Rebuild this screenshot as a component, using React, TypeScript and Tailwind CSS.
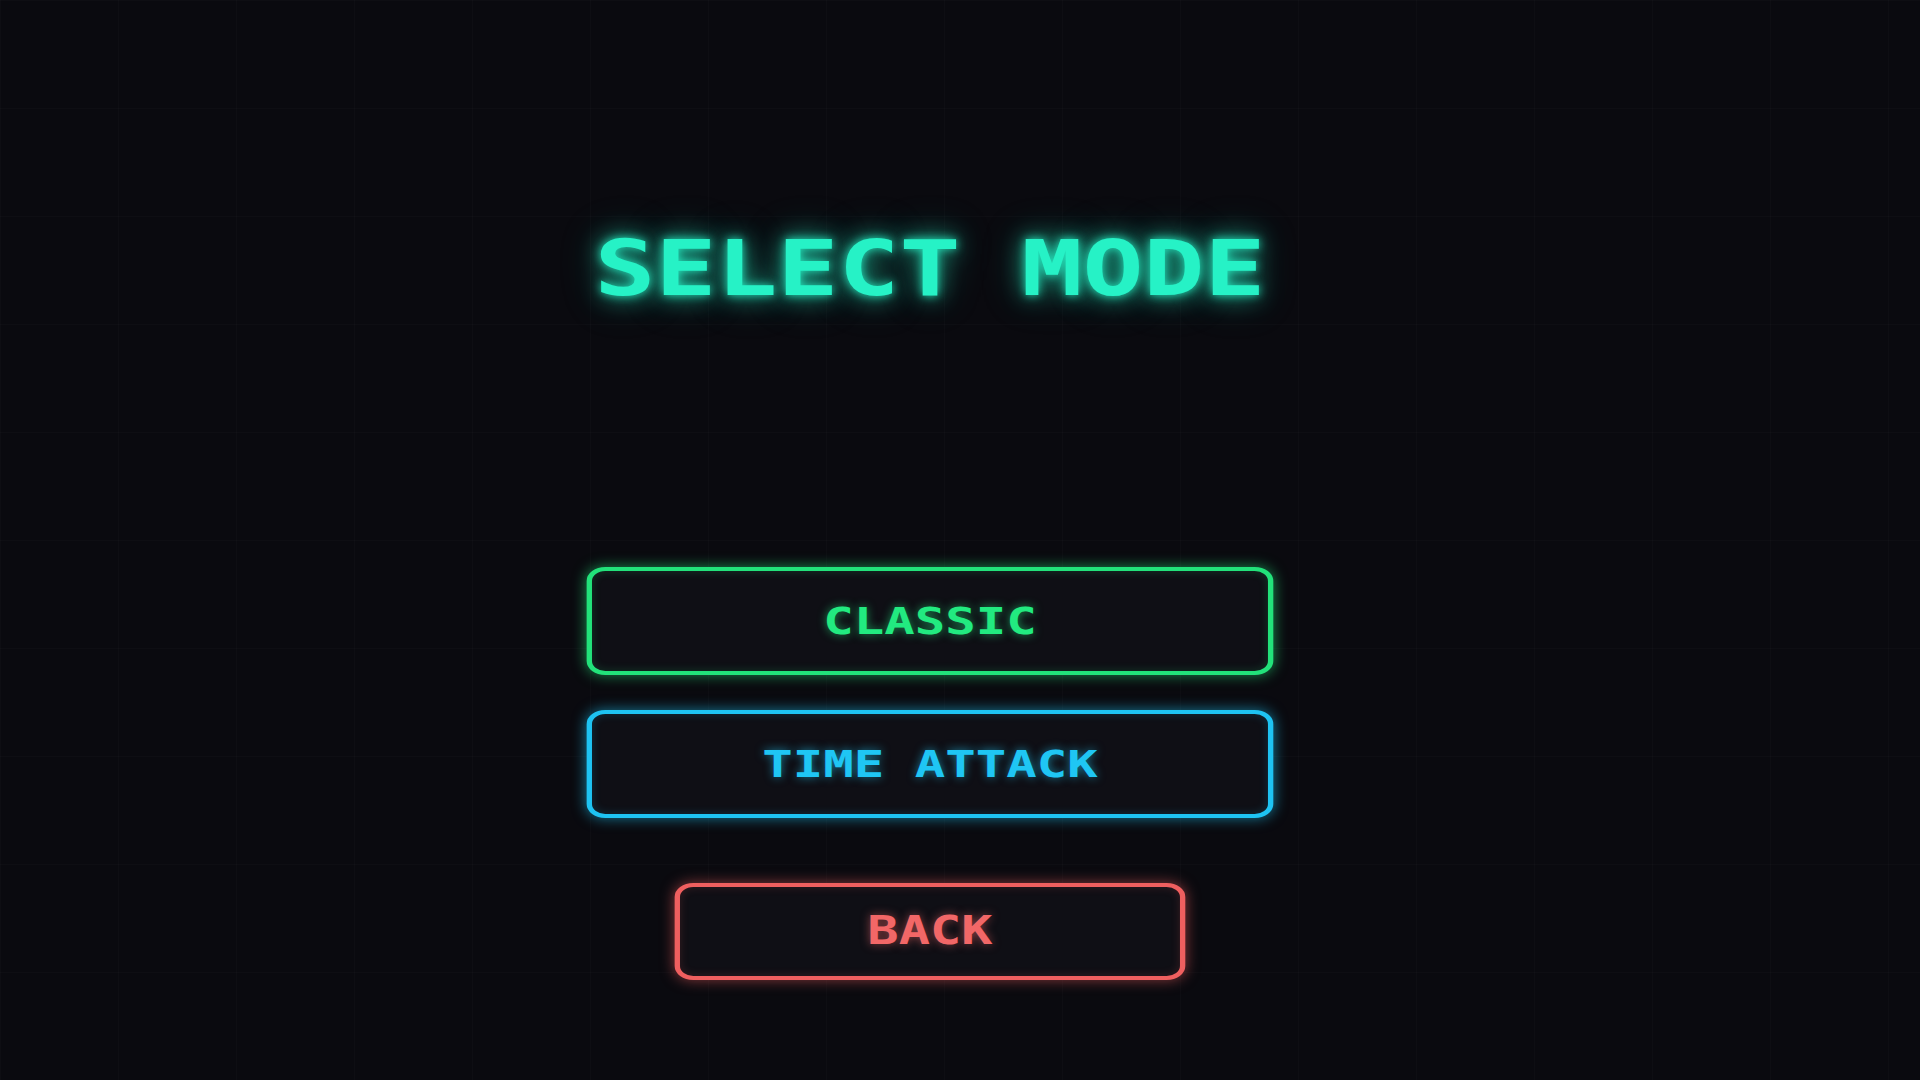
const modes = [
  {
    label: 'CLASSIC',
    className:
      'text-[#22ea80] border-[#22e27a] shadow-[0_0_12px_rgba(34,226,122,0.6),inset_0_0_8px_rgba(34,226,122,0.2)] [text-shadow:0_0_8px_rgba(34,234,128,0.6)]',
  },
  {
    label: 'TIME ATTACK',
    className:
      'text-[#1fc6f4] border-[#1ec3f2] shadow-[0_0_12px_rgba(30,195,242,0.6),inset_0_0_8px_rgba(30,195,242,0.2)] [text-shadow:0_0_8px_rgba(31,198,244,0.6)]',
  },
];

// the game is drawn on a 4:3 stage stretched to fill the 16:9 window
export default function App() {
  return (
    <div className="min-h-screen w-full bg-[#0a0a0f] bg-[linear-gradient(rgba(255,255,255,0.014)_1px,transparent_1px),linear-gradient(90deg,rgba(255,255,255,0.014)_1px,transparent_1px)] bg-[size:118px_108px] overflow-hidden">
      <div className="w-[1440px] origin-left scale-x-[1.3333] flex flex-col items-center pr-[45px] font-['DejaVu_Sans_Mono',monospace] font-bold">
        <h1 className="mt-[231px] text-[76px] leading-none text-[#26f2c6] [text-shadow:0_0_8px_rgba(38,242,198,0.9),0_0_20px_rgba(38,242,198,0.65),0_0_36px_rgba(38,242,198,0.35)]">
          SELECT MODE
        </h1>

        <div className="mt-[260px] flex flex-col gap-[35px]">
          {modes.map((m) => (
            <button
              key={m.label}
              className={`w-[515px] h-[108px] rounded-[14px] border-[4px] bg-[#0f0f15] flex items-center justify-center text-[38px] font-bold ${m.className}`}
            >
              {m.label}
            </button>
          ))}
        </div>

        <button className="mt-[65px] w-[383px] h-[97px] rounded-[14px] border-[4px] border-[#ef5f5f] bg-[#0f0f15] flex items-center justify-center text-[39px] font-bold text-[#f26767] shadow-[0_0_12px_rgba(239,95,95,0.55),inset_0_0_8px_rgba(239,95,95,0.18)] [text-shadow:0_0_8px_rgba(242,103,103,0.55)]">
          BACK
        </button>
      </div>
    </div>
  );
}
